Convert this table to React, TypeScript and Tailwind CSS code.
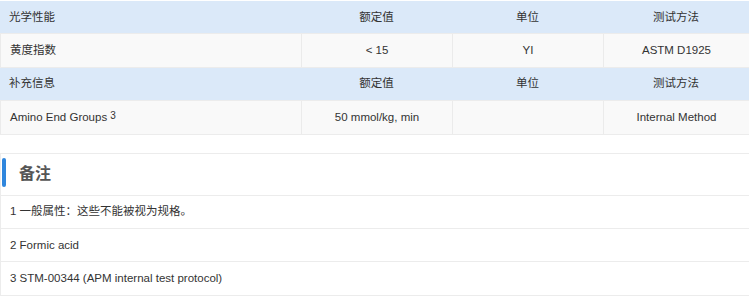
import React from "react"

const font = { fontFamily: '"Liberation Sans", Arial, "Noto Sans CJK SC", sans-serif' }

type Row = { head?: boolean; cells: React.ReactNode[] }

const rows: Row[] = [
  { head: true, cells: ["光学性能", "额定值", "单位", "测试方法"] },
  { cells: ["黄度指数", "< 15", "YI", "ASTM D1925"] },
  { head: true, cells: ["补充信息", "额定值", "单位", "测试方法"] },
  {
    cells: [
      <span>
        Amino End Groups <sup className="text-[10px] relative -top-[2px]">3</sup>
      </span>,
      "50 mmol/kg, min",
      "",
      "Internal Method",
    ],
  },
]

const notes = [
  "1 一般属性：这些不能被视为规格。",
  "2 Formic acid",
  "3 STM-00344 (APM internal test protocol)",
]

export default function App() {
  return (
    <div className="w-[749px] h-[296px] bg-white text-[11.5px] text-[#333] overflow-hidden" style={font}>
      {/* Spec table */}
      <div className="pt-[1px]">
        {rows.map((row, i) => (
          <div
            key={i}
            className={`grid grid-cols-[301px_151px_151px_1fr] h-[33.4px] border-b border-[#ececec] ${
              row.head ? "bg-[#dbe9f9]" : "bg-[#f9f9f9]"
            }`}
          >
            {row.cells.map((c, j) => (
              <div
                key={j}
                className={`flex items-center ${j === 0 ? "pl-[9px]" : "justify-center"} ${
                  !row.head ? "border-l border-[#ebebeb]" : ""
                }`}
              >
                {c}
              </div>
            ))}
          </div>
        ))}
      </div>

      {/* Notes */}
      <div className="mt-[18px] border-t border-l border-[#ececec]">
        <div className="flex items-center h-[42px] border-b border-[#ececec] relative">
          <span className="absolute left-[1px] top-[4px] w-[4px] h-[29px] rounded-[2px] bg-[#2f86dd]" />
          <span className="ml-[18px] text-[16px] font-bold text-[#555]">备注</span>
        </div>
        {notes.map((n, i) => (
          <div key={i} className="flex items-center h-[33.4px] pl-[9px] border-b border-[#ececec]">
            {n}
          </div>
        ))}
      </div>
    </div>
  )
}
